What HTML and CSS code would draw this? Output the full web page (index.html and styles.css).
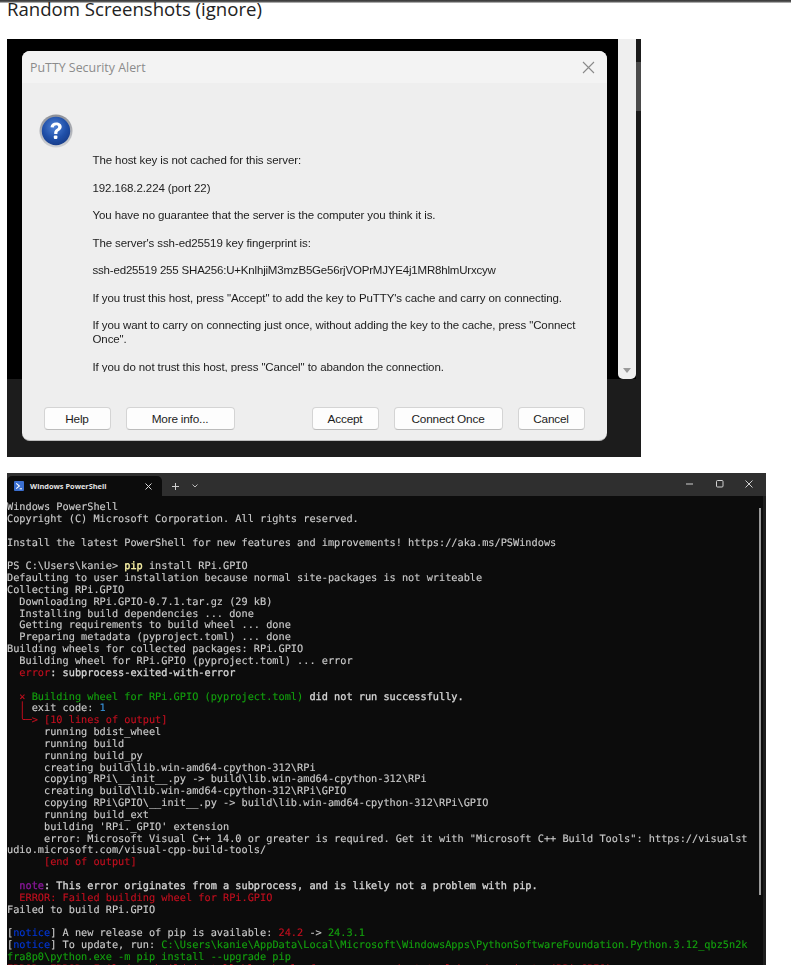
FILE: index.html
```html
<!DOCTYPE html>
<html lang="en">
<head>
<meta charset="utf-8">
<title>Random Screenshots (ignore)</title>
<link rel="stylesheet" href="styles.css">
</head>
<body>
<div class="topbar"></div>
<main class="page">
<h1 class="heading">Random Screenshots (ignore)</h1>
<section class="shot-putty">
  <div class="dialog">
    <header class="dialog-title">
      <span class="dialog-name">PuTTY Security Alert</span>
      <svg class="dialog-close" width="13" height="13" viewBox="0 0 13 13"><path d="M1 1l11 11M12 1L1 12" stroke="#8a8a8a" stroke-width="1.1" fill="none"/></svg>
    </header>
    <div class="dialog-body">
      <svg class="help-icon" width="34" height="34" viewBox="0 0 34 34">
        <defs>
          <radialGradient id="orb" cx="45%" cy="35%" r="70%"><stop offset="0" stop-color="#4f82d6"/><stop offset="0.6" stop-color="#1f4fa8"/><stop offset="1" stop-color="#163a86"/></radialGradient>
          <linearGradient id="rim" x1="0" y1="0" x2="0" y2="1"><stop offset="0" stop-color="#8d9098"/><stop offset="1" stop-color="#d0d2d6"/></linearGradient>
        </defs>
        <circle cx="17" cy="17" r="16.5" fill="url(#rim)"/>
        <circle cx="17" cy="17" r="14.2" fill="url(#orb)"/>
        <path d="M11.5 13.2c.3-3.2 2.6-4.8 5.7-4.8 3.2 0 5.5 1.7 5.5 4.4 0 2-1.2 3-2.6 3.9-1.2.8-1.7 1.3-1.7 2.6v.7h-3.2v-1c0-2 .8-3 2.3-4 1.1-.7 1.7-1.2 1.7-2.1 0-1-.8-1.7-2-1.7-1.3 0-2.2.8-2.4 2.2z" fill="#fff"/>
        <rect x="14.8" y="21.6" width="3.6" height="3.5" rx="1" fill="#fff"/>
      </svg>
      <div class="dialog-text">
        <p>The host key is not cached for this server:</p>
        <p>192.168.2.224 (port 22)</p>
        <p>You have no guarantee that the server is the computer you think it is.</p>
        <p>The server's ssh-ed25519 key fingerprint is:</p>
        <p class="fingerprint">ssh-ed25519 255 SHA256:U+KnlhjiM3mzB5Ge56rjVOPrMJYE4j1MR8hlmUrxcyw</p>
        <p>If you trust this host, press "Accept" to add the key to PuTTY's cache and carry on connecting.</p>
        <p>If you want to carry on connecting just once, without adding the key to the cache, press "Connect Once".</p>
        <p>If you do not trust this host, press "Cancel" to abandon the connection.</p>
      </div>
    </div>
    <footer class="dialog-actions">
      <button class="btn btn-help">Help</button>
      <button class="btn btn-more">More info...</button>
      <button class="btn btn-accept">Accept</button>
      <button class="btn btn-once">Connect Once</button>
      <button class="btn btn-cancel">Cancel</button>
    </footer>
  </div>
  <div class="side-strip"><span class="side-arrow"></span></div>
  <div class="side-rail"><div class="side-thumb"></div></div>
</section>
<section class="terminal">
  <div class="tabbar">
    <div class="tab">
      <svg class="ps-icon" width="10" height="10" viewBox="0 0 10 10"><rect width="10" height="10" rx="1" fill="#3b6fd0"/><path d="M2.2 2.4L5.4 5 2.2 7.6" stroke="#fff" stroke-width="1.1" fill="none"/><path d="M5.6 7.8h2.4" stroke="#fff" stroke-width="1"/></svg>
      <span class="tab-name">Windows PowerShell</span>
      <svg class="tab-close" width="7" height="7" viewBox="0 0 7 7"><path d="M.5.5l6 6M6.5.5l-6 6" stroke="#d8d8d8" stroke-width="1" fill="none"/></svg>
    </div>
    <svg class="tab-plus" width="7" height="7" viewBox="0 0 7 7"><path d="M3.5 0v7M0 3.500h7" stroke="#cfcfcf" stroke-width="1" fill="none"/></svg>
    <svg class="tab-down" width="6" height="4" viewBox="0 0 6 4"><path d="M.5.500L3 3 5.500.500" stroke="#bdbdbd" stroke-width="1" fill="none"/></svg>
    <div class="win-controls">
      <svg width="8" height="8" viewBox="0 0 8 8"><path d="M0 4h7" stroke="#d0d0d0" stroke-width="1"/></svg>
      <svg width="8" height="8" viewBox="0 0 8 8"><rect x=".5" y=".5" width="6.500" height="6.500" rx="1" stroke="#d0d0d0" fill="none"/></svg>
      <svg width="8" height="8" viewBox="0 0 8 8"><path d="M.5.500l7 7M7.500.500l-7 7" stroke="#d0d0d0" fill="none"/></svg>
    </div>
  </div>
  <div class="term-body">
    <pre class="term-text">Windows PowerShell
Copyright (C) Microsoft Corporation. All rights reserved.

Install the latest PowerShell for new features and improvements! https://aka.ms/PSWindows

PS C:\Users\kanie&gt; <span class="y">pip</span> install RPi.GPIO
Defaulting to user installation because normal site-packages is not writeable
Collecting RPi.GPIO
  Downloading RPi.GPIO-0.7.1.tar.gz (29 kB)
  Installing build dependencies ... done
  Getting requirements to build wheel ... done
  Preparing metadata (pyproject.toml) ... done
Building wheels for collected packages: RPi.GPIO
  Building wheel for RPi.GPIO (pyproject.toml) ... error
  <span class="r">error</span><b>: subprocess-exited-with-error</b>

  <span class="r">×</span> <span class="g">Building wheel for RPi.GPIO (pyproject.toml)</span> <b>did not run successfully.</b>
  <span class="r">│</span> exit code: <span class="c">1</span>
  <span class="r">╰─&gt; [10 lines of output]</span>
      running bdist_wheel
      running build
      running build_py
      creating build\lib.win-amd64-cpython-312\RPi
      copying RPi\__init__.py -&gt; build\lib.win-amd64-cpython-312\RPi
      creating build\lib.win-amd64-cpython-312\RPi\GPIO
      copying RPi\GPIO\__init__.py -&gt; build\lib.win-amd64-cpython-312\RPi\GPIO
      running build_ext
      building 'RPi._GPIO' extension
      error: Microsoft Visual C++ 14.0 or greater is required. Get it with "Microsoft C++ Build Tools": https://visualst
udio.microsoft.com/visual-cpp-build-tools/
      <span class="r">[end of output]</span>

  <span class="m">note</span><b>: This error originates from a subprocess, and is likely not a problem with pip.</b>
  <span class="r">ERROR: Failed building wheel for RPi.GPIO</span>
Failed to build RPi.GPIO

[<span class="b">notice</span>] A new release of pip is available: <span class="r">24.2</span> -&gt; <span class="g">24.3.1</span>
[<span class="b">notice</span>] To update, run: <span class="g">C:\Users\kanie\AppData\Local\Microsoft\WindowsApps\PythonSoftwareFoundation.Python.3.12_qbz5n2k</span>
<span class="g">fra8p0\python.exe -m pip install --upgrade pip</span>
<span class="r">ERROR: ERROR: Failed to build installable wheels for some pyproject.toml based projects (RPi.GPIO)</span></pre>
    <div class="term-scroll"></div>
  </div>
</section>
</main>
</body>
</html>
```
FILE: styles.css
```css
html, body { margin: 0; padding: 0; background: #fff; }
body { height: 965px; overflow: hidden; font-family: "Liberation Sans", sans-serif; }
.topbar { height: 3px; background: linear-gradient(#333, #5a5a5a 55%, #d8d8d8); }
.page { padding: 0 7px; }
.heading { margin: -1px 0 0; height: 37px; font: 400 18.6px/14px "Open Sans", sans-serif; color: #222; }
.shot-putty { position: relative; width: 634px; height: 418px; box-sizing: border-box; padding: 12px 34px 0 15px; background: linear-gradient(#000 340px, #1c1c1c 340px); }
.dialog { height: 390px; box-sizing: border-box; display: flex; flex-direction: column; background: #eeeeee; border-radius: 8px; border-bottom: 1px solid #bdbdbd; position: relative; z-index: 1; }
.dialog-title { height: 32px; flex: none; display: flex; align-items: center; justify-content: space-between; padding: 0 12px 0 8px; background: #f3f3f3; border-radius: 8px 8px 0 0; }
.dialog-name { font: 400 12.4px "Open Sans", sans-serif; color: #8b8b8b; }
.dialog-body { flex: none; height: 289px; display: flex; padding: 31px 0 0 17px; box-sizing: border-box; overflow: hidden; }
.help-icon { flex: none; margin-right: 19.5px; filter: blur(.3px); }
.dialog-text { padding-top: 39px; width: 486px; font-size: 11.5px; letter-spacing: -.1px; line-height: 14px; color: #1c1c1c; filter: blur(.25px); }
.dialog-text p { margin: 0 0 13.5px; }
.dialog-text .fingerprint { letter-spacing: -.19px; }
.dialog-actions { flex: 1; display: flex; align-items: flex-start; padding: 35px 0 0 21.500px; }
.btn { height: 23px; box-sizing: border-box; margin: 0; padding: 0; font: 400 11.8px "Liberation Sans", sans-serif; letter-spacing: -.2px; color: #1c1c1c; background: #fdfdfd; border: 1px solid #d4d4d4; border-bottom-color: #bcbcbc; border-radius: 4px; }
.btn-help { width: 67px; margin-right: 15px; }
.btn-more { width: 109px; margin-right: 77px; }
.btn-accept { width: 67px; margin-right: 15px; }
.btn-once { width: 109px; margin-right: 15px; }
.btn-cancel { width: 67px; }
.side-strip { position: absolute; left: 611px; top: 0; width: 18px; height: 340px; background: #efefef; border-radius: 0 0 5px 5px; }
.side-arrow { position: absolute; left: 5px; bottom: 6px; border: 4px solid transparent; border-top: 5px solid #9a9a9a; border-bottom: 0; }
.side-rail { position: absolute; left: 629px; top: 0; width: 5px; height: 340px; padding-top: 23px; box-sizing: border-box; background: #1a1a1a; }
.side-thumb { height: 49px; background: #4a4a4a; }
.terminal { width: 759px; height: 492px; margin-top: 16px; background: #0c0c0c; overflow: hidden; }
.tabbar { height: 23px; display: flex; align-items: center; background: #2f2f2f; }
.tab { width: 155px; height: 20px; margin-top: 3px; box-sizing: border-box; display: flex; align-items: center; padding: 0 10px 0 7px; background: #0c0c0c; border-radius: 5px 5px 0 0; }
.ps-icon { flex: none; margin-right: 6px; }
.tab-name { flex: 1; font: 700 7.4px "Open Sans", sans-serif; color: #e4e4e4; }
.tab-plus { margin: 3px 0 0 10px; }
.tab-down { margin: 3px 0 0 13px; }
.win-controls { margin: -2px 0 0 auto; display: flex; gap: 21.5px; padding-right: 13px; }
.term-body { position: relative; height: 469px; background: #0c0c0c; border-right: 3px solid #1e1e1e; }
.term-text { margin: 0; padding-top: 6px; font: 400 10.25px/11.84px "DejaVu Sans Mono", monospace; text-rendering: geometricPrecision; -webkit-text-stroke: .12px currentColor; color: #cccccc; white-space: pre; filter: blur(.25px); }
.term-text b { font-weight: 400; -webkit-text-stroke: .3px currentColor; color: #d6d6d6; }
.y { color: #f9f1a5; -webkit-text-stroke: .35px currentColor; }
.r { color: #c50f1f; }
.g { color: #13a10e; }
.c { color: #3a96dd; }
.m { color: #881798; -webkit-text-stroke: .35px currentColor; }
.b { color: #0037da; }
.term-scroll { position: absolute; right: 2px; top: 12px; width: 2px; height: 387px; background: #9a9a9a; }
```
